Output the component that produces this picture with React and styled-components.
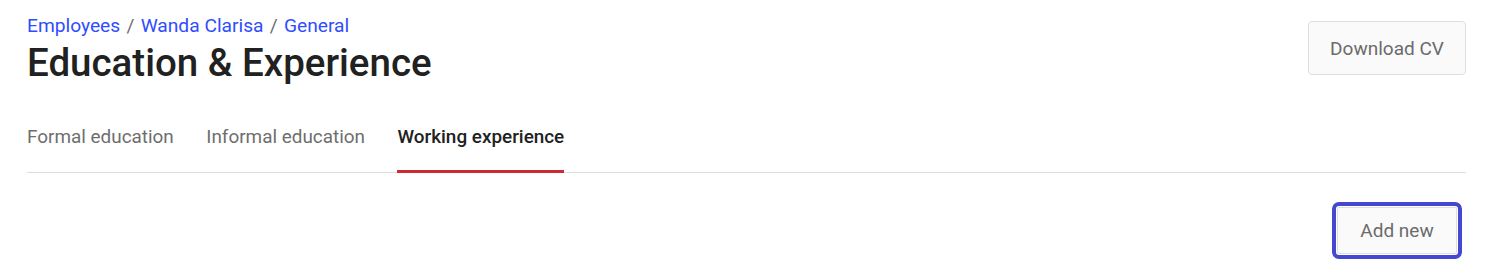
import React, { useState } from "react";
import styled, { createGlobalStyle } from "styled-components";

const GlobalStyle = createGlobalStyle`
  body {
    margin: 0;
    background: #fff;
    font-family: Roboto, "Liberation Sans", sans-serif;
  }
`;

const Page = styled.div`
  box-sizing: border-box;
  min-height: 100vh;
  padding: 14px 23px 20px 27px;
`;

const Header = styled.div`
  display: flex;
  justify-content: space-between;
  align-items: flex-start;
`;

const Crumbs = styled.div`
  font-size: 19.2px;
  line-height: 24px;
  color: #707070;
  white-space: pre;
`;

const Crumb = styled.a`
  color: #2f4dff;
  text-decoration: none;
`;

const Sep = styled.span`
  margin: 0 1.5px;
`;

const Title = styled.h1`
  margin: 0;
  font-size: 38.5px;
  line-height: 50px;
  font-weight: 500;
  color: #212121;
`;

const Button = styled.button`
  font-family: inherit;
  font-size: 19px;
  color: #6b6b6b;
  background: #fafafa;
  border: 1px solid #dedede;
  border-radius: ${(p) => (p.$focus ? 2 : 4)}px;
  height: ${(p) => p.$h}px;
  width: ${(p) => p.$w}px;
  padding: 0;
  cursor: pointer;
  outline: ${(p) => (p.$focus ? "4px solid #4447cf" : "none")};
  outline-offset: 1px;
`;

const DownloadWrap = styled.div`
  padding-top: 7px;
`;

const Tabs = styled.div`
  display: flex;
  gap: 32.5px;
  margin-top: 25px;
  border-bottom: 1px solid #dedede;
`;

const Tab = styled.div`
  font-size: 18.9px;
  line-height: 24px;
  padding: 12px 0 21px;
  margin-bottom: -1px;
  color: ${(p) => (p.$active ? "#212121" : "#6e6e6e")};
  font-weight: ${(p) => (p.$active ? 500 : 400)};
  border-bottom: 3px solid ${(p) => (p.$active ? "#cc2b36" : "transparent")};
  cursor: pointer;
`;

const Actions = styled.div`
  display: flex;
  justify-content: flex-end;
  padding: 34px 9px 0 0;
`;

const tabs = ["Formal education", "Informal education", "Working experience"];

export default function App() {
  const [active, setActive] = useState(2);
  return (
    <>
      <GlobalStyle />
      <Page>
        <Header>
          <div>
            <Crumbs>
              <Crumb href="#">Employees</Crumb>
              <Sep> / </Sep>
              <Crumb href="#">Wanda Clarisa</Crumb>
              <Sep> / </Sep>
              <Crumb href="#">General</Crumb>
            </Crumbs>
            <Title>Education &amp; Experience</Title>
          </div>
          <DownloadWrap>
            <Button $h={54} $w={158}>Download CV</Button>
          </DownloadWrap>
        </Header>
        <Tabs>
          {tabs.map((t, i) => (
            <Tab key={t} $active={i === active} onClick={() => setActive(i)}>
              {t}
            </Tab>
          ))}
        </Tabs>
        <Actions>
          <Button $h={47} $w={120} $focus>Add new</Button>
        </Actions>
      </Page>
    </>
  );
}
